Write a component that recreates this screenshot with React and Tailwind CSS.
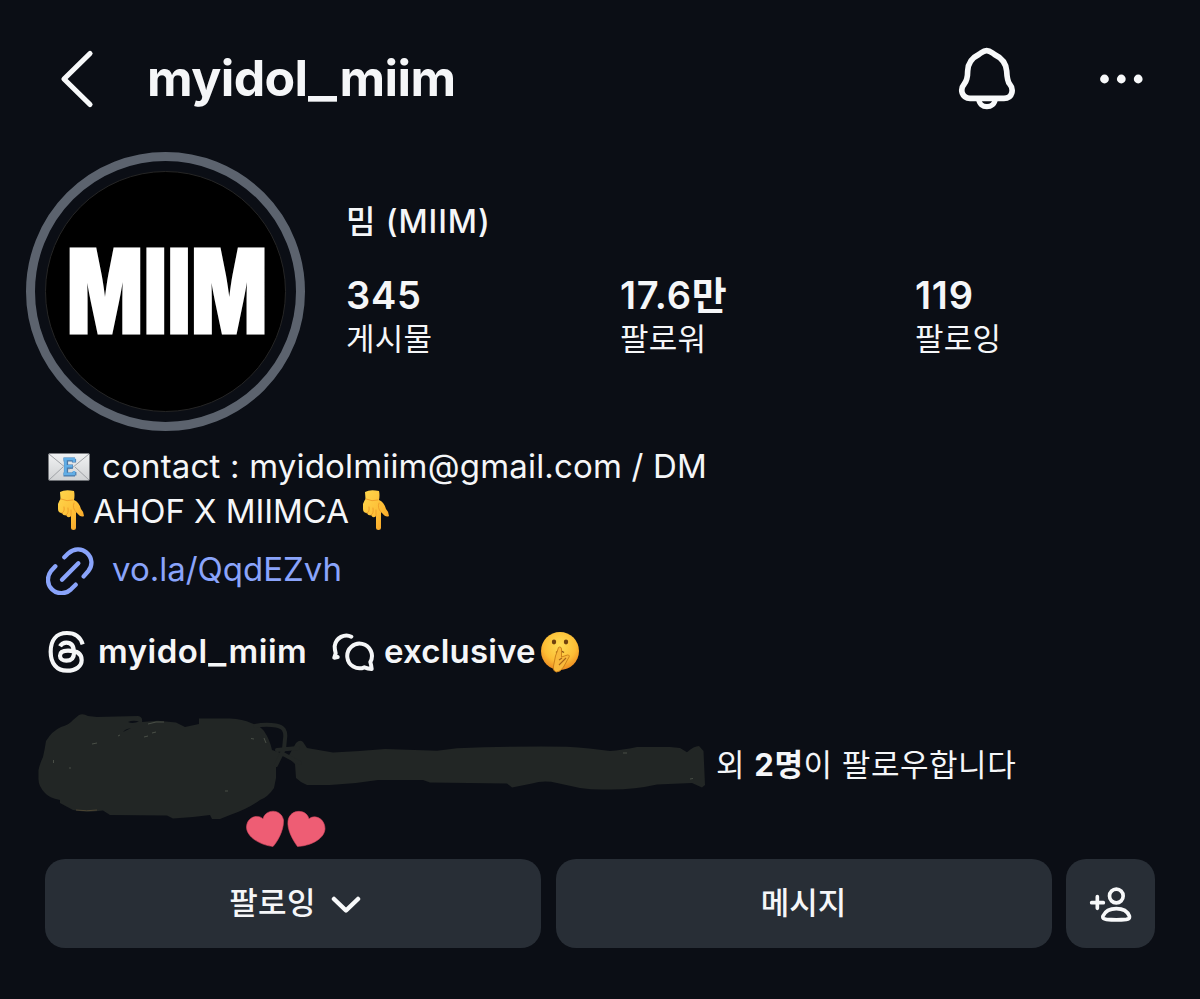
import React from "react";

const Back = () => (
  <svg className="h-[60px] w-[36px]" viewBox="0 0 36 60" fill="none" stroke="#f8f9fa" strokeWidth="5.200" strokeLinecap="round" strokeLinejoin="round">
    <path d="M30 4.500 4 30 30 55.500" />
  </svg>
);

const Bell = () => (
  <svg className="h-[64px] w-[58px]" viewBox="84 53 174 192" fill="none" stroke="#f8f9fa" strokeWidth="17" strokeLinejoin="round">
    <path d="M170 64C160 64 155 70 147 75C128 84 114 98 113 125C113 148 109 157 102 165C95 173 94 183 97 192C101 203 109 207 120 207H222C233 207 242 203 245 192C248 182 246 172 239 164C232 156 231 146 230 125C228 98 212 84 193 75C185 70 180 64 170 64Z" />
    <path d="M146 208C148 240 193 240 196 208" strokeWidth="16" />
  </svg>
);

const Dots = () => (
  <svg className="h-[10px] w-[44px]" viewBox="0 0 44 10" fill="#f8f9fa">
    <circle cx="4.500" cy="5" r="4.400" />
    <circle cx="21.300" cy="5" r="4.400" />
    <circle cx="38.200" cy="5" r="4.400" />
  </svg>
);

const Mail = () => (
  <svg className="h-[28px] w-[42px]" viewBox="0 0 42 28">
    <defs>
      <linearGradient id="env" x1="0" y1="0" x2="0" y2="1">
        <stop offset="0" stopColor="#f1f2f3" />
        <stop offset="1" stopColor="#cfd1d3" />
      </linearGradient>
    </defs>
    <rect x=".5" y=".5" width="41" height="27" rx="1" fill="url(#env)" />
    <path d="M1 27 15 14M41 27 27 14M1 1l17 14q3 2 6 0L41 1" fill="none" stroke="#9fa2a6" strokeWidth="1" />
    <path d="M15.500 6.500h11.500M15.500 21.500h11.500M18 6.500v15M18 13.700h7M26 6v3.500M26.300 19v3.500" stroke="#4a78a8" strokeWidth="4.200" fill="none" />
    <path d="M15.500 6h11M15.500 21h11M17.500 6v15M18 13.300h6.500M26 5v4M26 18v4" stroke="#62aee6" strokeWidth="2.600" fill="none" />
  </svg>
);

const Hand = ({ id }) => (
  <svg className="h-[42px] w-[30px]" viewBox="0 0 30 42">
    <defs>
      <linearGradient id={id} x1="0" y1="0" x2="1" y2="1">
        <stop offset="0" stopColor="#ffd84d" />
        <stop offset=".6" stopColor="#fdbc35" />
        <stop offset="1" stopColor="#f49a23" />
      </linearGradient>
    </defs>
    <path d="M4 3Q9 0 18 2Q19 6 18 11Q23 13 25 20Q28 23 28 27Q25 29 21 24L20 23V39Q20 41 17.500 41Q15 41 15 39V27Q12 30 10 26Q7 27 6 24Q2 24 2 20V15Q3 12 4.500 10Z" fill={`url(#${id})`} />
    <path d="M5 10Q11 13 17 11M6 24Q9 23 8 18M10 26Q13 25 12 19M15 27V21M18 14Q16 19 20 23" fill="none" stroke="#f0a02a" strokeWidth="1" strokeLinecap="round" />
  </svg>
);

const Link = () => (
  <svg className="h-[48px] w-[48px]" viewBox="49 322 144 144" fill="none" stroke="#8aa4fb" strokeWidth="13" strokeLinecap="round" strokeLinejoin="round">
    <path d="M104 353 116 341C133 326 156 325 171 339C188 354 190 377 176 394L162 410" />
    <path d="M77 380 64 394C51 411 52 435 67 449C84 465 108 464 124 449L138 435" />
    <path d="M146 371 97 420" />
  </svg>
);

const Threads = () => (
  <svg className="h-[44px] w-[38px]" viewBox="56 43 114 132" fill="none" stroke="#f5f6f7" strokeWidth="12.500" strokeLinejoin="round">
    <path d="M160 86C153 63 137 52 113 52C80 52 64 75 64 108C64 143 82 165 113 165C140 165 157 152 157 133C157 112 140 105 116 105C100 105 92 111 92 120C92 130 100 135 111 135C126 135 134 127 134 112C134 91 126 81 111 81C102 81 96 85 92 92" />
  </svg>
);

const Chats = () => (
  <svg className="h-[40px] w-[44px]" viewBox="34 48 132 120" fill="none" stroke="#f5f6f7" strokeWidth="12" strokeLinecap="round" strokeLinejoin="round">
    <path d="M152 138A37 37 0 1 0 134 154Q145 158 156 159Q155 148 152 138Z" />
    <path d="M95 62C76 52 48 64 45 91Q45 101 48 112L44 125L54 123" />
  </svg>
);

const Shush = () => (
  <svg className="h-[42px] w-[40px]" viewBox="0 0 40 42">
    <defs>
      <radialGradient id="face" cx=".5" cy=".35" r=".65">
        <stop offset="0" stopColor="#ffdd55" />
        <stop offset=".65" stopColor="#fcbd35" />
        <stop offset="1" stopColor="#ee8b20" />
      </radialGradient>
    </defs>
    <circle cx="20" cy="20" r="19" fill="url(#face)" />
    <ellipse cx="14" cy="11" rx="2.200" ry="2.400" fill="#70420e" />
    <ellipse cx="26" cy="11" rx="2.200" ry="2.400" fill="#70420e" />
    <path d="M16 21.500q4-3 8 0" stroke="#8b5514" strokeWidth="1.400" fill="none" />
    <path d="M18 18q0-2 1.700-2t1.800 2v8l6-2q3 0 1 3l-5 9q-3 5-7 5-4-1-3-6l2-10Z" fill="#f9b93b" stroke="#c77b17" strokeWidth=".9" />
    <path d="m19 29 3-2m-3 7 7-7" stroke="#a8641a" strokeWidth="1.100" fill="none" />
  </svg>
);

const Scribble = () => (
  <svg className="h-[146px] w-[680px] shrink-0" viewBox="30 706 680 146">
    <g fill="#222625">
      <path d="M73 720L79 715Q83 713 88 716L97 717L138 716Q143 717 142 722L158 720.700L176 722.500L185 727L199 724V718.500H230Q243 719 251 723Q260 726 264 731Q270 740 272 750L281 753Q276 760 276 767V778L274 788Q268 797 260 800Q248 809 230 815L220 819H212L210 815L193 817L173 818.500L167 815.500L110 815L103 810.500Q88 813 73 810L60 803V800Q49 798 45 793Q38 786 38.500 778V770Q40 763 43 757Q45 748 46 741Q52 731 61 727Q69 725 73 720Z" />
      <path d="M296 743Q300 739 303 742L307 748L333 752.500Q360 751 385 749L437 750.700L457 748.300Q512 746 567 746.700Q590 748 610 751Q622 750 637 747H670L680 748L687 752.300Q694 746 699 746L703.500 751L705 785L702 787.500L692 783L680 783.500L657 784.500Q633 790 607 789.500Q594 790 580 788L557 783Q544 780 532 783.500L512 787.500L507 783.500L430 782.500L423 780L378 780Q354 784 330 785H307L301 782L296 778L295 764L288 757Z" />
    </g>
    <g fill="none" stroke="#222625" strokeWidth="4" strokeLinecap="round">
      <path d="M255 726Q265 724 276 725.500Q287 727 285 739L284 749L276 765M277 750 298 748M283 754 300 763" />
    </g>
    <path d="M139 721.500q-6-1.500-11 .5q5 2 11-.5M131 728q-6 1-8 4q4-2 8-4" fill="#0b0e15" />
    <path d="M148 724q8-3 16-2M144 737l4-1M152 733l4-1M118 736l2-1M92 744l5-1M53.500 760v3M69 768h2M251 738.500l3 .5M264 738l2 5M225 791h3M623 753h4M690 779l3-.5" stroke="#53594f" strokeWidth=".8" fill="none" />
    <path d="M76 810q11 1.500 21 0" stroke="#4b4432" strokeWidth="1" fill="none" />
    <g fill="#ee5d74" stroke="#d84862" strokeWidth=".6">
      <path d="M273 846.500C260 845 246.500 837 246.500 827C247 816 259 814 263 819C265 809 281 808 283.500 820C284 831 277 842 273 846.500Z" />
      <path d="M297.500 846.500C292 839 287 829 288 821C290 808 307 809 309 819C314 814 325 818 325 829C324 840 309 846 297.500 846.500Z" />
    </g>
  </svg>
);

const AddPerson = () => (
  <svg className="h-[36px] w-[44px]" viewBox="146 106 132 108" fill="none" stroke="#f8f9fa" strokeWidth="11" strokeLinecap="round" strokeLinejoin="round">
    <path d="M171 138v35M154 156h35" />
    <circle cx="228" cy="136" r="20.500" />
    <path d="M188 196C195 181 210 174 228 174C246 174 261 181 267 196C269 204 264 205 258 206Q228 209 198 206C190 205 186 203 188 196Z" />
  </svg>
);

const Stat = ({ value, label, className }) => (
  <div className={className}>
    <div className="-mt-px flex h-[44px] items-center text-[38px] font-semibold leading-[44px] tracking-[0.8px]">{value}</div>
    <div className="flex h-[43px] items-center text-[31px] font-normal leading-[43px] tracking-[0.2px]">{label}</div>
  </div>
);

export default function App() {
  return (
    <main className="flex h-[999px] w-[1200px] flex-col overflow-hidden whitespace-nowrap bg-[#0b0e15] font-['Inter','Noto_Sans_CJK_KR',sans-serif] text-[#f5f6f8]">
      <header className="flex h-[152px] items-center pt-[6px]">
        <div className="ml-[60px] w-[87px]"><Back /></div>
        <h1 className="-mt-[2px] w-[811px] text-[50px] font-bold leading-[60px] tracking-[-0.600px]">myidol<span className="inline-block w-[32px] origin-left scale-x-[1.220]">_</span>miim</h1>
        <Bell />
        <div className="ml-[84px]"><Dots /></div>
      </header>

      <section className="flex h-[279px]">
        <div className="ml-[26px] flex h-[279px] w-[279px] items-center justify-center rounded-full border-[9px] border-[#5c636e]">
          <div className="flex h-[241px] w-[241px] items-center justify-center rounded-full border border-[#252525] bg-black">
            <span className="ml-[3px] scale-x-[.69] text-[115px] font-black leading-none tracking-[1px] text-white [-webkit-text-stroke:3px_#fff]">MIIM</span>
          </div>
        </div>
        <div className="ml-[41px] pt-[48px]">
          <div className="flex h-[44px] items-center text-[32px] font-medium tracking-[0.900px]">밈 (MIIM)</div>
          <div className="mt-[30px] flex">
            <Stat className="w-[274px]" value="345" label="게시물" />
            <Stat className="w-[295px]" value="17.6만" label="팔로워" />
            <Stat className="w-[120px]" value="119" label="팔로잉" />
          </div>
        </div>
      </section>

      <section className="pl-[46px] pt-[13px] text-[33px]">
        <div className="flex h-[45px] items-center">
          <div className="ml-[2px]"><Mail /></div>
          <span className="ml-[12px] tracking-[0.180px]">contact : myidolmiim@gmail.com / DM</span>
        </div>
        <div className="flex h-[45px] items-center">
          <div className="-mt-[4px] ml-[10px]"><Hand id="handLeft" /></div>
          <span className="ml-[7px] w-[268px] tracking-[-0.050px]">AHOF X MIIMCA</span>
          <div className="-mt-[4px]"><Hand id="handRight" /></div>
        </div>
        <div className="mt-[13px] flex h-[48px] items-center text-[#8aa4fb]">
          <Link />
          <span className="-mt-[2px] ml-[18px]">vo.la/QqdEZvh</span>
        </div>
      </section>

      <section className="mt-[35px] flex h-[44px] items-center pl-[48px] text-[33px] font-semibold">
        <Threads />
        <span className="ml-[12px] w-[233px] tracking-[0.500px]">myidol<span className="inline-block w-[21px] origin-left scale-x-[1.180]">_</span>miim</span>
        <Chats />
        <span className="ml-[9px] w-[156px] tracking-[0.200px]">exclusive</span>
        <Shush />
      </section>

      <section className="mt-[32px] flex h-[153px] items-start pl-[30px]">
        <Scribble />
        <p className="ml-[6px] mt-[35px] text-[31px] font-normal leading-[48px] tracking-[0.550px]">외 <b className="font-bold">2명</b>이 팔로우합니다</p>
      </section>

      <section className="flex h-[89px] gap-[14.5px] pl-[45px] text-[31px] font-medium">
        <button className="flex w-[496px] items-center justify-center gap-[15px] rounded-[20px] bg-[#282e36] pl-[4px]">
          <span className="tracking-[0.300px]">팔로잉</span>
          <svg className="h-[20px] w-[30px]" viewBox="0 0 30 20" fill="none" stroke="#f8f9fa" strokeWidth="4.500" strokeLinecap="round" strokeLinejoin="round"><path d="M3 5 15 16.500 27 5" /></svg>
        </button>
        <button className="flex w-[496px] items-center justify-center rounded-[20px] bg-[#282e36]">메시지</button>
        <button className="flex w-[89px] items-center justify-center rounded-[20px] bg-[#282e36]"><AddPerson /></button>
      </section>
    </main>
  );
}
